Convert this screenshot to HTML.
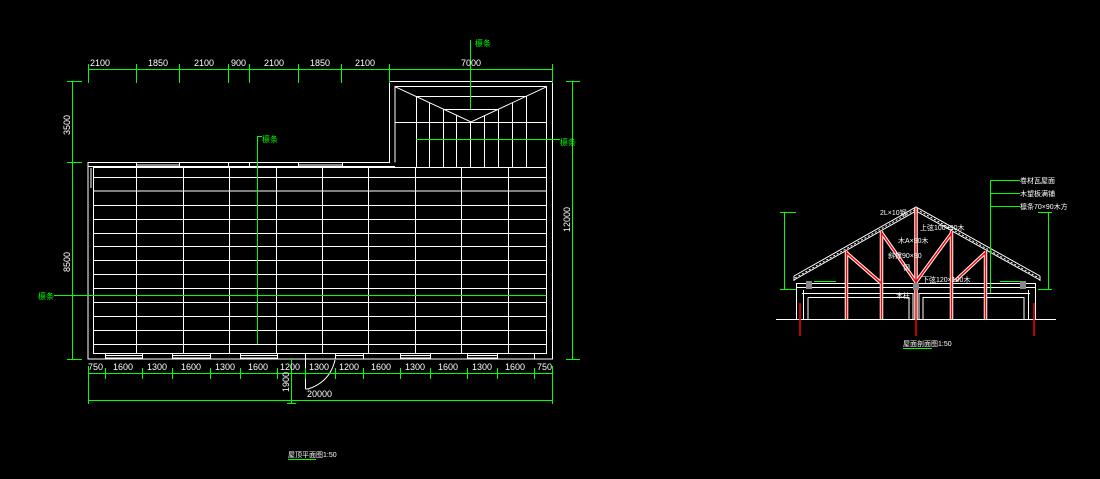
<!DOCTYPE html>
<html><head><meta charset="utf-8"><style>
html,body{margin:0;padding:0;background:#000;}
svg{display:block}
text{font-family:"Liberation Sans","Noto Sans CJK SC",sans-serif;}
</style></head><body>
<svg width="1100" height="479" viewBox="0 0 1100 479" xmlns="http://www.w3.org/2000/svg">
<rect width="1100" height="479" fill="#000"/>
<!-- PLAN white -->
<g stroke="#fff" stroke-width="1" fill="none" shape-rendering="crispEdges">
  <path d="M88,162.5 H389.5 V81.5 H552.5 V359 H88 Z"/>
  <rect x="93.5" y="167.5" width="453" height="186"/>
  <path d="M395,162.5 V86.5 H546.5 V167.5"/>
  <path d="M88,166.5 H395"/>
  <path d="M91,168 V188 M93.5,168 V188"/>
  <path d="M136,165 H179 M298,165 H342"/>
  <path d="M136.5,162.5V167 M179.5,162.5V167 M228.5,162.5V167 M249.5,162.5V167 M298.5,162.5V167 M342.5,162.5V167"/>
  <path d="M136.5,167.5V353.5 M183.5,167.5V353.5 M229.5,167.5V353.5 M276.5,167.5V353.5 M322.5,167.5V353.5 M368.5,167.5V353.5 M415.5,167.5V353.5 M461.5,167.5V353.5 M508.5,167.5V353.5"/>
  <path d="M93.5,177.5H546.5 M93.5,191H546.5 M93.5,205.5H546.5 M93.5,219.5H546.5 M93.5,233.5H546.5 M93.5,246.5H546.5 M93.5,260.5H546.5 M93.5,274.5H546.5 M93.5,288.5H546.5 M93.5,302.5H546.5 M93.5,316.5H546.5 M93.5,330.5H546.5 M93.5,344.5H546.5"/>
  <path d="M416,96.5H526 M443,109.5H498 M395,122.5H546.5"/>
  <path d="M416.5,96.5V167 M429.5,103V167 M443.5,109.5V167 M456.5,115.5V167 M470.5,122V167 M484.5,115.5V167 M498.5,109.5V167 M512.5,103V167 M526.5,96.5V167"/>
  <path d="M105,355.5H142 M172,355.5H210 M240,355.5H277 M335,355.5H363 M400,355.5H430 M467,355.5H497 M105,358H142 M172,358H210 M240,358H277 M400,358H430 M467,358H497"/>
  <path d="M105.5,353.5V359 M142.5,353.5V359 M172.5,353.5V359 M210.5,353.5V359 M240.5,353.5V359 M277.5,353.5V359 M305.5,353.5V389 M335.5,353.5V359 M363.5,353.5V359 M400.5,353.5V359 M430.5,353.5V359 M467.5,353.5V359 M497.5,353.5V359 M534.5,353.5V359"/>
  <path d="M305.5,389H309"/>
</g>
<path d="M395,86.7 L471,122 L546.7,86.7" stroke="#fff" fill="none" stroke-width="1"/>
<path d="M335,360 Q330,382 308,389" stroke="#fff" fill="none" stroke-width="1"/>
<!-- PLAN green -->
<g stroke="#0f0" stroke-width="1" fill="none" shape-rendering="crispEdges">
  <path d="M88,69.5H552.5"/>
  <path d="M88.5,64V83 M136.5,64V83 M179.5,64V83 M228.5,64V83 M249.5,64V83 M298.5,64V83 M341.5,64V83 M389.5,64V83 M552.5,64V83"/>
  <path d="M72.5,81V359 M67,81.5H82 M67,162.5H82 M67,359.5H82"/>
  <path d="M572.5,81V359 M566,81.5H580 M566,359.5H580"/>
  <path d="M470.5,40V109"/>
  <path d="M257.5,136V344 M257.5,136.5H262"/>
  <path d="M416,139.5H560"/>
  <path d="M54,295.5H546.5"/>
  <path d="M88,373.5H552.5 M88,400.5H552.5"/>
  <path d="M88.5,366V404 M105.5,368V379 M142.5,368V379 M172.5,368V379 M210.5,368V379 M240.5,368V379 M277.5,368V379 M305.5,368V379 M335.5,368V379 M363.5,368V379 M400.5,368V379 M430.5,368V379 M467.5,368V379 M497.5,368V379 M534.5,368V379 M552.5,366V404"/>
  <path d="M291.5,359V403 M287,403.5H296"/>
  <path d="M288,459.5H316"/>
</g>
<g fill="#fff" font-size="9">
  <text x="90" y="66">2100</text><text x="148" y="66">1850</text><text x="194" y="66">2100</text><text x="231" y="66">900</text><text x="264" y="66">2100</text><text x="310" y="66">1850</text><text x="355" y="66">2100</text><text x="461" y="66">7000</text>
  <text x="0" y="0" transform="translate(70,135) rotate(-90)">3500</text>
  <text x="0" y="0" transform="translate(70,272) rotate(-90)">8500</text>
  <text x="0" y="0" transform="translate(570,232) rotate(-90)">12000</text>
  <text x="88" y="370">750</text><text x="113" y="370">1600</text><text x="147" y="370">1300</text><text x="181" y="370">1600</text><text x="215" y="370">1300</text><text x="248" y="370">1600</text><text x="280" y="370">1200</text><text x="309" y="370">1300</text><text x="339" y="370">1200</text><text x="371" y="370">1600</text><text x="405" y="370">1300</text><text x="438" y="370">1600</text><text x="472" y="370">1300</text><text x="505" y="370">1600</text><text x="537" y="370">750</text>
  <text x="0" y="0" transform="translate(289,392) rotate(-90)">1900</text>
  <text x="307" y="397">20000</text>
  <text x="288" y="457" font-size="7">屋顶平面图1:50</text>
</g>
<g fill="#0f0" font-size="8">
  <text x="475" y="46">檩条</text><text x="262" y="142">檩条</text><text x="560" y="145">檩条</text><text x="38" y="299">檩条</text>
</g>
<!-- SECTION -->
<g stroke="#fff" stroke-width="1" fill="none">
  <path d="M776,319.5H1056"/>
  <path d="M794,276 L916,207 L1040,276"/>
  <path d="M794,280 L916,211 L1040,280"/>
  <path d="M795,278 L916,209 L1039,278" stroke-dasharray="2 2"/>
  <path d="M794,276V281 M1040,276V281"/>
  <path d="M796,283.5H1036 M796,287.5H1036" shape-rendering="crispEdges"/>
  <path d="M796.5,283V319 M803.5,290V319 M1035.5,283V319 M1028.5,290V319" shape-rendering="crispEdges"/>
  <path d="M802,293.5H913V319 M808,297.5H909V319 M808,297.5V319 M919,319V293.5H1030 M923,319V297.5H1024V319" shape-rendering="crispEdges"/>
</g>
<g stroke="#fff" stroke-width="3.5" fill="none">
  <path d="M846.5,251V319 M881.5,231V319 M916,208V319 M951.5,231V319 M985.5,251V319"/>
  <path d="M846.7,253 L881,283 M881.7,233 L916,282 M951.7,233 L916,282 M985,253 L955,281"/>
</g>
<g stroke="#f00" stroke-width="1.5" fill="none">
  <path d="M846.5,251V319 M881.5,231V319 M916,208V336 M951.5,231V319 M985.5,251V319 M800,303V336 M1034,303V336"/>
  <path d="M846.7,253 L881,283 M881.7,233 L916,282 M951.7,233 L916,282 M985,253 L955,281"/>
</g>
<rect x="806" y="281" width="6" height="8" fill="#888"/><rect x="1020" y="281" width="6" height="8" fill="#888"/><rect x="913" y="283" width="6" height="7" fill="#888"/>
<g stroke="#0f0" stroke-width="1" fill="none" shape-rendering="crispEdges">
  <path d="M784.5,212V289 M780,212.5H796 M780,289.5H796"/>
  <path d="M1048.5,212V289 M1038,212.5H1052 M1038,289.5H1052"/>
  <path d="M990.5,180V293 M990,180.5H1020 M990,193.5H1020 M990,206.5H1020"/>
  <path d="M814,281.5H836 M1000,281.5H1020"/>
  <path d="M903,348.5H932"/>
</g>
<g fill="#fff" font-size="7">
  <text x="1020" y="183">卷材瓦屋面</text><text x="1020" y="196">木望板满铺</text><text x="1020" y="209">檩条70×90木方</text>
  <text x="880" y="215">2L×10钢</text><text x="920" y="230">上弦100×90木</text><text x="898" y="243">木A×90木</text><text x="888" y="258">斜撑90×90</text><text x="922" y="282">下弦120×100木</text><text x="903" y="270">钢</text><text x="896" y="298">木柱</text>
  <text x="903" y="346">屋面剖面图1:50</text>
</g>
</svg>
</body></html>
